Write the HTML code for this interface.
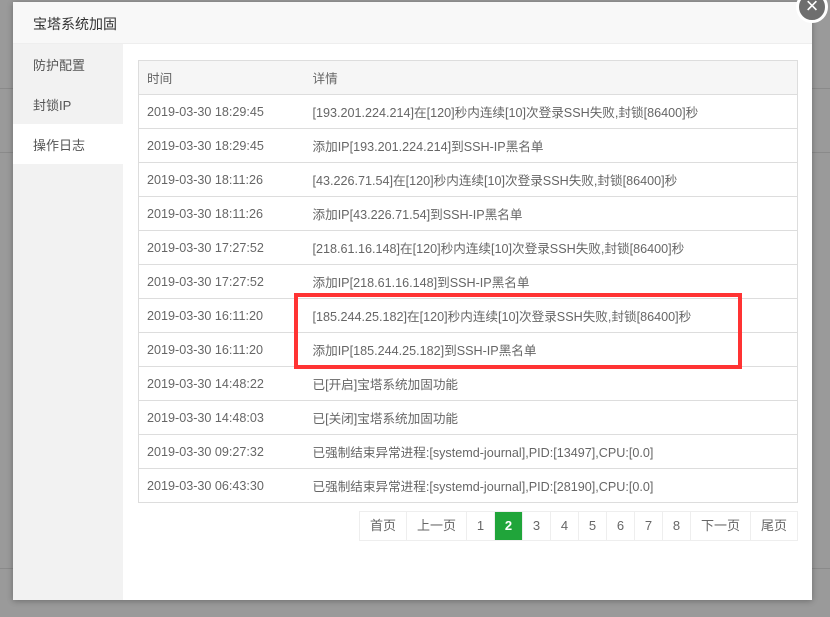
<!DOCTYPE html>
<html><head><meta charset="utf-8"><style>
*{margin:0;padding:0;box-sizing:border-box}
body{width:830px;height:617px;overflow:hidden;background:#9a9a9a;font-family:"Liberation Sans","Noto Sans CJK SC",sans-serif;font-size:12px;color:#555;position:relative}
.bgl{position:absolute;left:0;right:0;height:1px;background:#8a8a8a}
.modal{position:absolute;left:13px;top:2px;width:799px;height:598px;background:#fff;box-shadow:0 1px 6px rgba(0,0,0,.3)}
.hd{height:42px;background:#f8f8f8;border-bottom:1px solid #eee;line-height:44px;padding-left:20px;font-size:14px;color:#333}
.side{position:absolute;left:0;top:42px;width:110px;bottom:0;background:#f2f2f2}
.side div{height:40px;line-height:44px;padding-left:20px;font-size:13px;color:#555}
.side .on{background:#fff}
table{position:absolute;left:125px;top:58px;width:660px;border-collapse:collapse;border:1px solid #ddd}
td{height:34px;border-top:1px solid #ddd;padding-left:8px;font-size:12.6px;color:#666;white-space:nowrap}
tr:first-child td{background:#f6f6f6;height:34px}
td.t{width:166px}
.pg{position:absolute;right:14px;top:509px;display:flex;border:1px solid #eee;border-right:none}
.pg span{height:28px;line-height:27px;border-right:1px solid #eee;text-align:center;font-size:13px;color:#666;width:28px}
.pg .w{width:47px}.pg .w3{width:60px}
.pg .a{background:#20a53a;color:#fff;font-weight:bold}
.red{position:absolute;left:294px;top:293px;width:448px;height:76px;border:4px solid #f33}
.close{position:absolute;left:796px;top:-9px;width:32px;height:32px;border-radius:50%;background:#6e6e6e;border:3px solid #fff;color:#fff;text-align:center;line-height:24px;font-size:22px}
</style></head><body>
<div class="bgl" style="top:88px"></div><div class="bgl" style="top:152px"></div><div class="bgl" style="top:568px"></div>
<div class="modal">
<div class="hd">宝塔系统加固</div>
<div class="side"><div>防护配置</div><div>封锁IP</div><div class="on">操作日志</div></div>
<table>
<tr><td class="t">时间</td><td>详情</td></tr>
<tr><td class="t">2019-03-30 18:29:45</td><td>[193.201.224.214]在[120]秒内连续[10]次登录SSH失败,封锁[86400]秒</td></tr>
<tr><td class="t">2019-03-30 18:29:45</td><td>添加IP[193.201.224.214]到SSH-IP黑名单</td></tr>
<tr><td class="t">2019-03-30 18:11:26</td><td>[43.226.71.54]在[120]秒内连续[10]次登录SSH失败,封锁[86400]秒</td></tr>
<tr><td class="t">2019-03-30 18:11:26</td><td>添加IP[43.226.71.54]到SSH-IP黑名单</td></tr>
<tr><td class="t">2019-03-30 17:27:52</td><td>[218.61.16.148]在[120]秒内连续[10]次登录SSH失败,封锁[86400]秒</td></tr>
<tr><td class="t">2019-03-30 17:27:52</td><td>添加IP[218.61.16.148]到SSH-IP黑名单</td></tr>
<tr><td class="t">2019-03-30 16:11:20</td><td>[185.244.25.182]在[120]秒内连续[10]次登录SSH失败,封锁[86400]秒</td></tr>
<tr><td class="t">2019-03-30 16:11:20</td><td>添加IP[185.244.25.182]到SSH-IP黑名单</td></tr>
<tr><td class="t">2019-03-30 14:48:22</td><td>已[开启]宝塔系统加固功能</td></tr>
<tr><td class="t">2019-03-30 14:48:03</td><td>已[关闭]宝塔系统加固功能</td></tr>
<tr><td class="t">2019-03-30 09:27:32</td><td>已强制结束异常进程:[systemd-journal],PID:[13497],CPU:[0.0]</td></tr>
<tr><td class="t">2019-03-30 06:43:30</td><td>已强制结束异常进程:[systemd-journal],PID:[28190],CPU:[0.0]</td></tr>
</table>
<div class="pg"><span class="w">首页</span><span class="w3">上一页</span><span>1</span><span class="a">2</span><span>3</span><span>4</span><span>5</span><span>6</span><span>7</span><span>8</span><span class="w3">下一页</span><span class="w">尾页</span></div>
</div>
<div class="red"></div>
<div class="close">×</div>
</body></html>
